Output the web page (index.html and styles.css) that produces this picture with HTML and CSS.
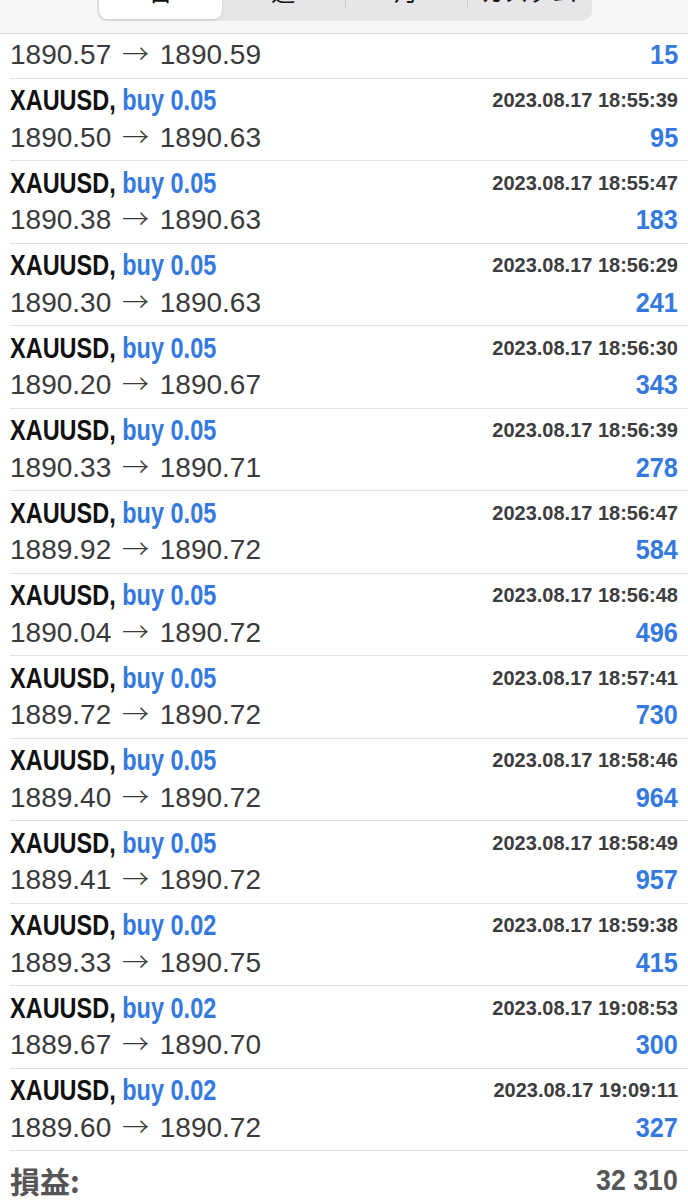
FILE: index.html
```html
<!DOCTYPE html>
<html lang="ja">

<head>
  <meta charset="UTF-8" />
  <meta name="viewport" content="width=device-width, initial-scale=1.0" />
  <title>履歴</title>
  <link rel="stylesheet" href="styles.css">
</head>

<body>
  <div class="tabs-bar">
    <div class="segments">
      <div class="segment active">日</div>
      <div class="segment">週</div>
      <div class="segment sep">月</div>
      <div class="segment sep">カスタム</div>
    </div>
  </div>

  <div class="deal-list">
    <div class="deal partial">
      <div class="line">
        <span class="prices">1890.57 <span class="arrow">→</span> 1890.59</span>
        <span class="profit">15</span>
      </div>
    </div>

    <div class="deal">
      <div class="line top">
        <span class="symbol">XAUUSD, <span class="side">buy 0.05</span></span>
        <span class="time">2023.08.17 18:55:39</span>
      </div>
      <div class="line">
        <span class="prices">1890.50 <span class="arrow">→</span> 1890.63</span>
        <span class="profit">95</span>
      </div>
    </div>

    <div class="deal">
      <div class="line top">
        <span class="symbol">XAUUSD, <span class="side">buy 0.05</span></span>
        <span class="time">2023.08.17 18:55:47</span>
      </div>
      <div class="line">
        <span class="prices">1890.38 <span class="arrow">→</span> 1890.63</span>
        <span class="profit">183</span>
      </div>
    </div>

    <div class="deal">
      <div class="line top">
        <span class="symbol">XAUUSD, <span class="side">buy 0.05</span></span>
        <span class="time">2023.08.17 18:56:29</span>
      </div>
      <div class="line">
        <span class="prices">1890.30 <span class="arrow">→</span> 1890.63</span>
        <span class="profit">241</span>
      </div>
    </div>

    <div class="deal">
      <div class="line top">
        <span class="symbol">XAUUSD, <span class="side">buy 0.05</span></span>
        <span class="time">2023.08.17 18:56:30</span>
      </div>
      <div class="line">
        <span class="prices">1890.20 <span class="arrow">→</span> 1890.67</span>
        <span class="profit">343</span>
      </div>
    </div>

    <div class="deal">
      <div class="line top">
        <span class="symbol">XAUUSD, <span class="side">buy 0.05</span></span>
        <span class="time">2023.08.17 18:56:39</span>
      </div>
      <div class="line">
        <span class="prices">1890.33 <span class="arrow">→</span> 1890.71</span>
        <span class="profit">278</span>
      </div>
    </div>

    <div class="deal">
      <div class="line top">
        <span class="symbol">XAUUSD, <span class="side">buy 0.05</span></span>
        <span class="time">2023.08.17 18:56:47</span>
      </div>
      <div class="line">
        <span class="prices">1889.92 <span class="arrow">→</span> 1890.72</span>
        <span class="profit">584</span>
      </div>
    </div>

    <div class="deal">
      <div class="line top">
        <span class="symbol">XAUUSD, <span class="side">buy 0.05</span></span>
        <span class="time">2023.08.17 18:56:48</span>
      </div>
      <div class="line">
        <span class="prices">1890.04 <span class="arrow">→</span> 1890.72</span>
        <span class="profit">496</span>
      </div>
    </div>

    <div class="deal">
      <div class="line top">
        <span class="symbol">XAUUSD, <span class="side">buy 0.05</span></span>
        <span class="time">2023.08.17 18:57:41</span>
      </div>
      <div class="line">
        <span class="prices">1889.72 <span class="arrow">→</span> 1890.72</span>
        <span class="profit">730</span>
      </div>
    </div>

    <div class="deal">
      <div class="line top">
        <span class="symbol">XAUUSD, <span class="side">buy 0.05</span></span>
        <span class="time">2023.08.17 18:58:46</span>
      </div>
      <div class="line">
        <span class="prices">1889.40 <span class="arrow">→</span> 1890.72</span>
        <span class="profit">964</span>
      </div>
    </div>

    <div class="deal">
      <div class="line top">
        <span class="symbol">XAUUSD, <span class="side">buy 0.05</span></span>
        <span class="time">2023.08.17 18:58:49</span>
      </div>
      <div class="line">
        <span class="prices">1889.41 <span class="arrow">→</span> 1890.72</span>
        <span class="profit">957</span>
      </div>
    </div>

    <div class="deal">
      <div class="line top">
        <span class="symbol">XAUUSD, <span class="side">buy 0.02</span></span>
        <span class="time">2023.08.17 18:59:38</span>
      </div>
      <div class="line">
        <span class="prices">1889.33 <span class="arrow">→</span> 1890.75</span>
        <span class="profit">415</span>
      </div>
    </div>

    <div class="deal">
      <div class="line top">
        <span class="symbol">XAUUSD, <span class="side">buy 0.02</span></span>
        <span class="time">2023.08.17 19:08:53</span>
      </div>
      <div class="line">
        <span class="prices">1889.67 <span class="arrow">→</span> 1890.70</span>
        <span class="profit">300</span>
      </div>
    </div>

    <div class="deal">
      <div class="line top">
        <span class="symbol">XAUUSD, <span class="side">buy 0.02</span></span>
        <span class="time">2023.08.17 19:09:11</span>
      </div>
      <div class="line">
        <span class="prices">1889.60 <span class="arrow">→</span> 1890.72</span>
        <span class="profit">327</span>
      </div>
    </div>
  </div>

  <div class="summary">
    <span class="summary-label">損益:</span>
    <span class="summary-value">32 310</span>
  </div>
</body>

</html>
```

FILE: styles.css
```css
body {
  margin: 0;
  font-family: "Liberation Sans", Arial, sans-serif;
  background-color: #ffffff;
  color: #3a3a3c;
  overflow: hidden;
}

.tabs-bar {
  display: flow-root;
  height: 33px;
  background-color: #f7f7f7;
  border-bottom: 1px solid #d6d6d6;
}

.segments {
  display: flex;
  width: 491px;
  height: 47px;
  margin: -30px 0 0 97px;
  padding: 2px;
  background-color: #e6e6e8;
  border-radius: 10px;
}

.segment {
  flex: 1;
  display: flex;
  align-items: center;
  justify-content: center;
  padding-bottom: 10px;
  font-family: "Noto Sans CJK JP", sans-serif;
  font-size: 24px;
  color: #111;
  position: relative;
}

.segment.sep::before {
  content: "";
  position: absolute;
  left: 0;
  top: 14px;
  bottom: 12px;
  width: 1px;
  background-color: #c9c9cc;
}

.segment.active {
  background-color: #ffffff;
  border-radius: 8px;
  box-shadow: 0 1px 3px rgba(0, 0, 0, 0.12);
}

.deal {
  margin-left: 10px;
  padding: 4px 10px 3.5px 0;
  border-bottom: 1px solid #e2e2e2;
}

.deal.partial {
  padding-top: 2px;
}

.line {
  display: flex;
  justify-content: space-between;
  align-items: center;
  height: 38px;
}

.line.top {
  height: 36px;
}

.symbol {
  display: inline-block;
  font-weight: bold;
  font-size: 29px;
  color: #111;
  transform: scaleX(0.81);
  transform-origin: left center;
  white-space: nowrap;
}

.side {
  color: #3479e0;
}

.time {
  font-weight: bold;
  font-size: 20px;
  color: #3c3c3e;
}

.prices {
  font-size: 28px;
  line-height: 38px;
  color: #3a3a3c;
  white-space: nowrap;
}

.arrow {
  font-family: "Noto Sans CJK JP", sans-serif;
  font-size: 27px;
  font-weight: 300;
  line-height: 0;
  margin: 0 3px;
}

.profit {
  display: inline-block;
  font-weight: bold;
  font-size: 28px;
  color: #3479e0;
  transform: scaleX(0.9);
  transform-origin: right center;
}

.summary {
  display: flex;
  justify-content: space-between;
  align-items: center;
  height: 38px;
  padding: 10px 10px 0 10px;
  color: #555557;
  font-weight: bold;
}

.summary-label {
  font-family: "Noto Sans CJK JP", sans-serif;
  font-size: 30px;
}

.summary-value {
  display: inline-block;
  font-size: 30px;
  transform: scaleX(0.89);
  transform-origin: right center;
}
```
